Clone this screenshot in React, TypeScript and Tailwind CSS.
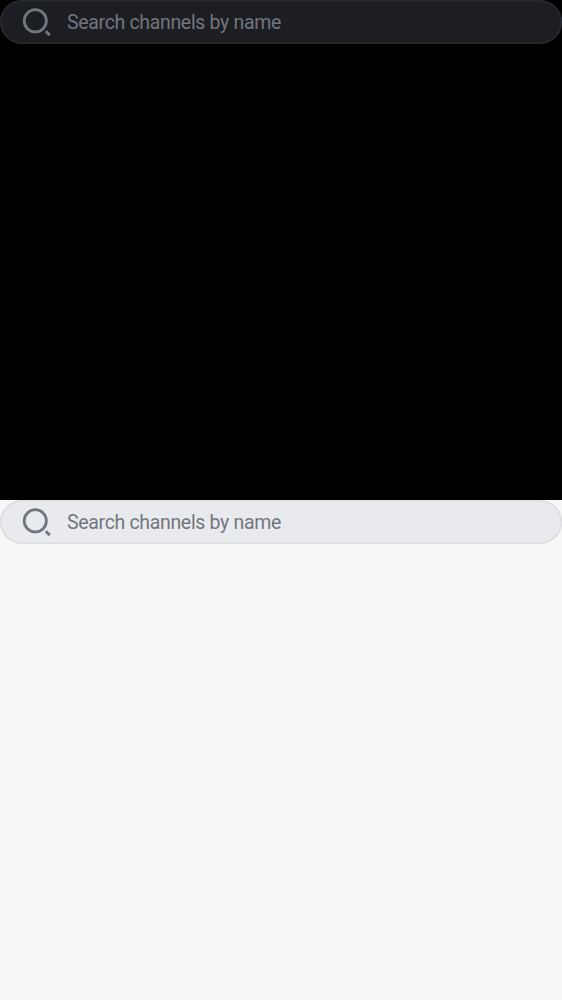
type Theme = "dark" | "light";

const themes = {
  dark: { page: "bg-black", bar: "shadow-[inset_0_0_0_1.5px_#272a30] bg-[#1c1e22]", ink: "text-[#72767e]" },
  light: { page: "bg-[#f7f7f8]", bar: "shadow-[inset_0_0_0_1.5px_#dbdde1] bg-[#e9eaed]", ink: "text-[#72767e]" },
};

function SearchIcon() {
  return (
    <svg className="ml-[22px] size-[30px] shrink-0" viewBox="0 0 30 30" fill="none" stroke="currentColor">
      <circle cx="13.3" cy="13.8" r="11.1" strokeWidth="2.8" />
      <path d="M23.8 24.2 27.8 28.2" strokeWidth="3" />
    </svg>
  );
}

function SearchPanel({ theme }: { theme: Theme }) {
  const t = themes[theme];
  return (
    <section className={`h-[500px] w-full ${t.page}`}>
      <div className={`flex h-11 w-full items-center rounded-full ${t.bar} ${t.ink}`}>
        <SearchIcon />
        <span className="ml-[15px] pt-0.5 font-[Roboto,sans-serif] text-[19.5px] leading-6 tracking-[-0.33px]">
          Search channels by name
        </span>
      </div>
    </section>
  );
}

export default function App() {
  return (
    <main className="h-[1000px] w-[562px] overflow-hidden">
      <SearchPanel theme="dark" />
      <SearchPanel theme="light" />
    </main>
  );
}
